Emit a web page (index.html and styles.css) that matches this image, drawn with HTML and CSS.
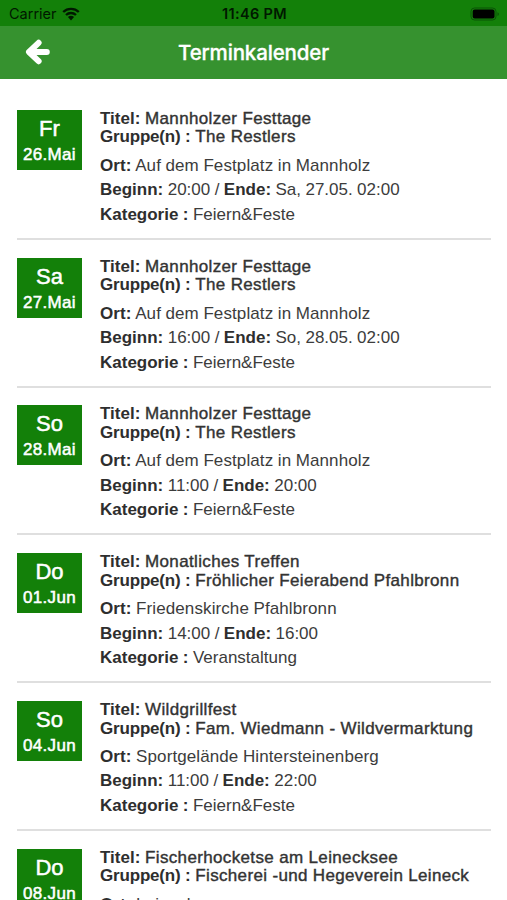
FILE: index.html
```html
<!DOCTYPE html>
<html lang="de">
<head>
    <meta charset="UTF-8">
    <meta name="viewport" content="width=device-width, initial-scale=1.0">
    <title>Terminkalender</title>
    <link rel="stylesheet" href="styles.css">
</head>
<body>
    <div class="statusbar">
        <div class="carrier">
            <span>Carrier</span>
            <svg class="wifi" viewBox="0 0 18 14" width="18" height="14">
                <path d="M1.2 5A11.2 11.2 0 0 1 16.8 5M4 8A7.2 7.2 0 0 1 14 8" fill="none" stroke="#001800" stroke-width="2.3"/>
                <path d="M5.9 10.1A4.5 4.5 0 0 1 12.1 10.1L9 13.4Z" fill="#001800"/>
            </svg>
        </div>
        <span class="clock">11:46 PM</span>
        <svg class="battery" viewBox="0 0 30 14" width="30" height="14">
            <rect x="1" y="1" width="25" height="12" rx="3.5" fill="none" stroke="#0b5307"/>
            <rect x="2.7" y="2.5" width="21.8" height="9" rx="2" fill="#000"/>
            <path d="M27.5 5.2a2 2 0 0 1 0 3.8z" fill="#0b5307"/>
        </svg>
    </div>
    <header class="navbar">
        <svg class="back" viewBox="0 0 26 26" width="26" height="26">
            <path d="M13.6 3.8L4 13L13.6 22.2M5.5 13H21.8" fill="none" stroke="#fff" stroke-width="6" stroke-linecap="round" stroke-linejoin="round"/>
        </svg>
        <h1>Terminkalender</h1>
    </header>
    <main class="termine">
        <article class="termin">
            <div class="datum"><span class="tag">Fr</span><span class="monat">26.Mai</span></div>
            <div class="info">
                <h2><b>Titel:</b> <span class="titel">Mannholzer Festtage</span></h2>
                <h2><b class="gr">Gruppe(n) :</b> <span class="gruppe">The Restlers</span></h2>
                <p class="ort"><b>Ort:</b> Auf dem Festplatz in Mannholz</p>
                <p><b>Beginn:</b> 20:00 / <b>Ende:</b> Sa, 27.05. 02:00</p>
                <p><b>Kategorie :</b> Feiern&amp;Feste</p>
            </div>
        </article>
        <article class="termin">
            <div class="datum"><span class="tag">Sa</span><span class="monat">27.Mai</span></div>
            <div class="info">
                <h2><b>Titel:</b> <span class="titel">Mannholzer Festtage</span></h2>
                <h2><b class="gr">Gruppe(n) :</b> <span class="gruppe">The Restlers</span></h2>
                <p class="ort"><b>Ort:</b> Auf dem Festplatz in Mannholz</p>
                <p><b>Beginn:</b> 16:00 / <b>Ende:</b> So, 28.05. 02:00</p>
                <p><b>Kategorie :</b> Feiern&amp;Feste</p>
            </div>
        </article>
        <article class="termin">
            <div class="datum"><span class="tag">So</span><span class="monat">28.Mai</span></div>
            <div class="info">
                <h2><b>Titel:</b> <span class="titel">Mannholzer Festtage</span></h2>
                <h2><b class="gr">Gruppe(n) :</b> <span class="gruppe">The Restlers</span></h2>
                <p class="ort"><b>Ort:</b> Auf dem Festplatz in Mannholz</p>
                <p><b>Beginn:</b> 11:00 / <b>Ende:</b> 20:00</p>
                <p><b>Kategorie :</b> Feiern&amp;Feste</p>
            </div>
        </article>
        <article class="termin">
            <div class="datum"><span class="tag">Do</span><span class="monat">01.Jun</span></div>
            <div class="info">
                <h2><b>Titel:</b> <span class="titel">Monatliches Treffen</span></h2>
                <h2><b class="gr">Gruppe(n) :</b> <span class="gruppe">Fröhlicher Feierabend Pfahlbronn</span></h2>
                <p class="ort"><b>Ort:</b> Friedenskirche Pfahlbronn</p>
                <p><b>Beginn:</b> 14:00 / <b>Ende:</b> 16:00</p>
                <p><b>Kategorie :</b> Veranstaltung</p>
            </div>
        </article>
        <article class="termin">
            <div class="datum"><span class="tag">So</span><span class="monat">04.Jun</span></div>
            <div class="info">
                <h2><b>Titel:</b> <span class="titel">Wildgrillfest</span></h2>
                <h2><b class="gr">Gruppe(n) :</b> <span class="gruppe">Fam. Wiedmann - Wildvermarktung</span></h2>
                <p class="ort"><b>Ort:</b> Sportgelände Hintersteinenberg</p>
                <p><b>Beginn:</b> 11:00 / <b>Ende:</b> 22:00</p>
                <p><b>Kategorie :</b> Feiern&amp;Feste</p>
            </div>
        </article>
        <article class="termin">
            <div class="datum"><span class="tag">Do</span><span class="monat">08.Jun</span></div>
            <div class="info">
                <h2><b>Titel:</b> <span class="titel">Fischerhocketse am Leinecksee</span></h2>
                <h2><b class="gr">Gruppe(n) :</b> <span class="gruppe">Fischerei -und Hegeverein Leineck</span></h2>
                <p class="ort"><b>Ort:</b> Leinecksee</p>
            </div>
        </article>
    </main>
</body>
</html>
```
FILE: styles.css
```css
* {
    box-sizing: border-box;
}
body {
    margin: 0;
    height: 900px;
    overflow: hidden;
    display: flex;
    flex-direction: column;
    background: #fff;
    color: #3c3c3c;
    font-family: "Liberation Sans", Arial, sans-serif;
}
h1, h2, p {
    margin: 0;
    font-weight: normal;
}
b {
    color: #2e2e2e;
}
.statusbar {
    flex: none;
    height: 26px;
    display: grid;
    grid-template-columns: 1fr auto 1fr;
    align-items: center;
    padding: 1px 7px 0 9px;
    background: #138009;
    color: #001800;
    font-family: Inter, sans-serif;
    font-size: 14.5px;
}
.carrier {
    display: flex;
    align-items: center;
    gap: 5px;
}
.clock {
    font-weight: 600;
    letter-spacing: 0.35px;
}
.battery {
    justify-self: end;
}
.navbar {
    flex: none;
    height: 53px;
    display: grid;
    grid-template-columns: 1fr auto 1fr;
    align-items: center;
    padding: 0 25px;
    background: #36922f;
    color: #fff;
}
.back {
    margin-top: -2px;
}
.navbar h1 {
    font-family: Inter, sans-serif;
    font-size: 20.5px;
    font-weight: 500;
    letter-spacing: -0.15px;
    -webkit-text-stroke: 0.3px #fff;
}
.termine {
    flex: 1;
    min-height: 0;
    overflow: hidden;
    padding: 13px 16px 0 17px;
}
.termin {
    display: flex;
    align-items: flex-start;
    gap: 18px;
    height: 147.8px;
    padding-top: 17.9px;
    border-bottom: 2px solid #dfdfdf;
}
.datum {
    flex: none;
    width: 65px;
    height: 60px;
    display: flex;
    flex-direction: column;
    align-items: center;
    padding-top: 5px;
    background: #138009;
    color: #fff;
    -webkit-text-stroke: 0.5px #fff;
}
.tag {
    font-size: 22px;
    line-height: 27px;
}
.monat {
    font-size: 17px;
    letter-spacing: 0.3px;
    line-height: 25px;
}
.info {
    white-space: nowrap;
    font-size: 17px;
}
.info h2 {
    font-size: 17px;
    line-height: 18.6px;
}
.titel, .gruppe {
    color: #333;
    -webkit-text-stroke: 0.4px #333;
}
.titel {
    letter-spacing: 0.35px;
}
.gr {
    letter-spacing: -0.18px;
}
.gruppe {
    letter-spacing: 0.34px;
}
.info p {
    line-height: 24.5px;
    word-spacing: -0.3px;
}
.info .ort {
    margin-top: 6.7px;
    letter-spacing: 0.1px;
}
```
